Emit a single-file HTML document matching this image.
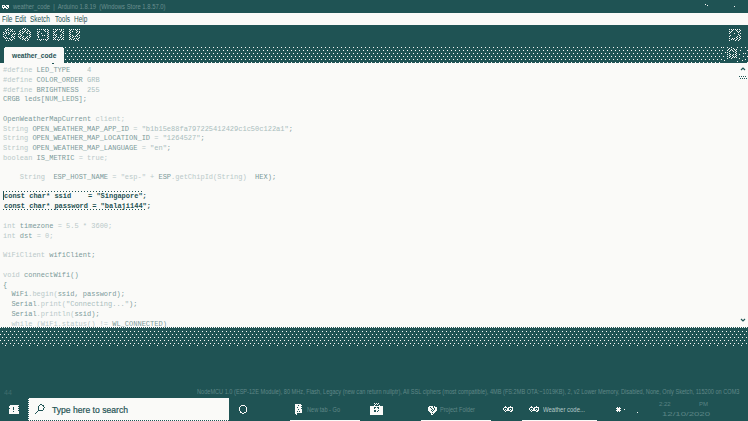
<!DOCTYPE html>
<html><head><meta charset="utf-8">
<style>
*{margin:0;padding:0;box-sizing:border-box}
html,body{width:748px;height:421px;overflow:hidden;background:#fafaf8;font-family:"Liberation Sans",sans-serif}
.a{position:absolute;white-space:pre}
.teal{background:#1f5354}
svg{position:absolute;display:block;shape-rendering:crispEdges}
#code{position:absolute;left:3px;top:66px;font-family:"Liberation Mono",monospace;font-size:7px;line-height:9.75px;white-space:pre;color:#7d9b9b}
#code .k{color:#b9c9c9}
#code .s{color:#a9bdbd}
#code .b{font-weight:bold;color:#1f5354;position:relative;top:-1px;left:1px}
.mn{position:absolute;top:14px;font-size:8.5px;line-height:10px;color:#1f5354;transform:scaleX(.76);transform-origin:0 0}
</style></head><body>
<svg width="0" height="0" style="left:0;top:0"><defs>
<pattern id="pd" width="4" height="6" patternUnits="userSpaceOnUse"><rect width="4" height="6" fill="#1f5354"/><rect x="1" y="0" width="1" height="1" fill="#fafaf8"/><rect x="3" y="3" width="1" height="1" fill="#fafaf8"/></pattern>
<pattern id="pc" width="2" height="2" patternUnits="userSpaceOnUse"><rect width="2" height="2" fill="#1f5354"/><rect x="0" y="0" width="1" height="1" fill="#fafaf8"/><rect x="1" y="1" width="1" height="1" fill="#fafaf8"/></pattern>
<pattern id="ph" width="3" height="1" patternUnits="userSpaceOnUse"><rect x="0" width="1" height="1" fill="#1f5354"/></pattern>
<pattern id="ps" width="8" height="1" patternUnits="userSpaceOnUse"><rect width="8" height="1" fill="#1f5354"/><rect x="5" width="1" height="1" fill="#fafaf8"/></pattern>
<pattern id="pd2" width="4" height="6" patternUnits="userSpaceOnUse"><rect width="4" height="6" fill="#1f5354"/><rect x="0" y="1" width="1" height="1" fill="#fafaf8"/><rect x="2" y="4" width="1" height="1" fill="#fafaf8"/></pattern>
</defs></svg>
<!-- title bar -->
<div class="a teal" style="left:0;top:0;width:748px;height:13px"></div>
<svg style="left:0;top:0" width="12" height="12"><path fill="#fafaf8" d="M2 5h1v1h-1zM3 5h1v1h-1zM4 5h1v1h-1zM6 5h1v1h-1zM7 5h1v1h-1zM8 5h1v1h-1zM2 6h1v1h-1zM4 6h1v1h-1zM5 6h1v1h-1zM7 6h1v1h-1zM8 6h1v1h-1zM2 7h1v1h-1zM3 7h1v1h-1zM4 7h1v1h-1zM5 7h1v1h-1zM6 7h1v1h-1zM8 7h1v1h-1zM3 8h1v1h-1zM6 8h1v1h-1zM7 8h1v1h-1z"/></svg>
<div class="a" style="left:13px;top:2px;font-size:7px;line-height:9px;color:#6a8f8f;transform:scaleX(.84);transform-origin:0 0">weather_code  |  Arduino 1.8.19  (Windows Store 1.8.57.0)</div>
<div class="a" style="left:705px;top:4px;width:1px;height:1px;background:#fafaf8"></div><div class="a" style="left:707px;top:5px;width:1px;height:1px;background:#fafaf8"></div><div class="a" style="left:734px;top:6px;width:1px;height:1px;background:#fafaf8"></div>
<!-- menu -->
<div class="mn" style="left:2px">File</div>
<div class="mn" style="left:15px">Edit</div>
<div class="mn" style="left:30px">Sketch</div>
<div class="mn" style="left:55px">Tools</div>
<div class="mn" style="left:74px">Help</div>
<!-- toolbar -->
<div class="a teal" style="left:0;top:25px;width:748px;height:22px"></div>
<svg style="left:0;top:0" width="90" height="45"><path fill="#fafaf8" d="M8 28h1v1h-1zM5 29h1v1h-1zM7 29h1v1h-1zM10 29h1v1h-1zM12 29h1v1h-1zM6 30h1v1h-1zM8 30h1v1h-1zM11 30h1v1h-1zM5 31h1v1h-1zM10 31h1v1h-1zM12 31h1v1h-1zM14 31h1v1h-1zM3 32h1v1h-1zM6 32h1v1h-1zM8 32h1v1h-1zM4 33h1v1h-1zM6 33h1v1h-1zM9 33h1v1h-1zM13 33h1v1h-1zM15 33h1v1h-1zM3 34h1v1h-1zM8 34h1v1h-1zM12 34h1v1h-1zM14 34h1v1h-1zM5 35h1v1h-1zM11 35h1v1h-1zM3 36h1v1h-1zM12 36h1v1h-1zM14 36h1v1h-1zM4 37h1v1h-1zM6 37h1v1h-1zM11 37h1v1h-1zM13 37h1v1h-1zM5 38h1v1h-1zM7 38h1v1h-1zM9 38h1v1h-1zM14 38h1v1h-1zM10 39h1v1h-1zM12 39h1v1h-1zM6 40h1v1h-1zM8 40h1v1h-1zM11 40h1v1h-1zM23 28h1v1h-1zM25 28h1v1h-1zM22 29h1v1h-1zM24 29h1v1h-1zM27 29h1v1h-1zM20 30h1v1h-1zM25 30h1v1h-1zM28 30h1v1h-1zM19 31h1v1h-1zM22 31h1v1h-1zM24 31h1v1h-1zM27 31h1v1h-1zM29 31h1v1h-1zM20 32h1v1h-1zM23 32h1v1h-1zM26 32h1v1h-1zM30 32h1v1h-1zM19 33h1v1h-1zM22 33h1v1h-1zM27 33h1v1h-1zM29 33h1v1h-1zM18 34h1v1h-1zM20 34h1v1h-1zM30 34h1v1h-1zM21 35h1v1h-1zM29 35h1v1h-1zM18 36h1v1h-1zM20 36h1v1h-1zM23 36h1v1h-1zM27 36h1v1h-1zM30 36h1v1h-1zM19 37h1v1h-1zM22 37h1v1h-1zM26 37h1v1h-1zM29 37h1v1h-1zM20 38h1v1h-1zM23 38h1v1h-1zM25 38h1v1h-1zM27 38h1v1h-1zM22 39h1v1h-1zM24 39h1v1h-1zM28 39h1v1h-1zM25 40h1v1h-1zM27 40h1v1h-1zM37 29h1v1h-1zM39 29h1v1h-1zM41 29h1v1h-1zM43 29h1v1h-1zM45 29h1v1h-1zM47 29h1v1h-1zM44 30h1v1h-1zM48 30h1v1h-1zM37 31h1v1h-1zM39 31h1v1h-1zM45 31h1v1h-1zM47 31h1v1h-1zM38 32h1v1h-1zM48 32h1v1h-1zM37 33h1v1h-1zM41 33h1v1h-1zM47 33h1v1h-1zM38 34h1v1h-1zM48 34h1v1h-1zM37 35h1v1h-1zM42 35h1v1h-1zM44 35h1v1h-1zM47 35h1v1h-1zM38 36h1v1h-1zM48 36h1v1h-1zM38 37h1v1h-1zM47 37h1v1h-1zM48 38h1v1h-1zM37 39h1v1h-1zM39 39h1v1h-1zM41 39h1v1h-1zM43 39h1v1h-1zM45 39h1v1h-1zM47 39h1v1h-1zM40 40h1v1h-1zM46 40h1v1h-1zM53 29h1v1h-1zM55 29h1v1h-1zM57 29h1v1h-1zM59 29h1v1h-1zM61 29h1v1h-1zM63 29h1v1h-1zM56 30h1v1h-1zM61 30h1v1h-1zM53 31h1v1h-1zM55 31h1v1h-1zM60 31h1v1h-1zM63 31h1v1h-1zM54 32h1v1h-1zM62 32h1v1h-1zM53 33h1v1h-1zM63 33h1v1h-1zM54 34h1v1h-1zM56 34h1v1h-1zM61 34h1v1h-1zM53 35h1v1h-1zM55 35h1v1h-1zM60 35h1v1h-1zM63 35h1v1h-1zM56 36h1v1h-1zM61 36h1v1h-1zM53 37h1v1h-1zM55 37h1v1h-1zM58 37h1v1h-1zM60 37h1v1h-1zM63 37h1v1h-1zM54 38h1v1h-1zM62 38h1v1h-1zM53 39h1v1h-1zM55 39h1v1h-1zM57 39h1v1h-1zM59 39h1v1h-1zM61 39h1v1h-1zM63 39h1v1h-1zM58 40h1v1h-1zM69 29h1v1h-1zM71 29h1v1h-1zM73 29h1v1h-1zM75 29h1v1h-1zM77 29h1v1h-1zM79 29h1v1h-1zM70 30h1v1h-1zM76 30h1v1h-1zM69 31h1v1h-1zM72 31h1v1h-1zM77 31h1v1h-1zM79 31h1v1h-1zM70 32h1v1h-1zM76 32h1v1h-1zM79 32h1v1h-1zM69 33h1v1h-1zM78 33h1v1h-1zM70 34h1v1h-1zM77 34h1v1h-1zM69 35h1v1h-1zM72 35h1v1h-1zM76 35h1v1h-1zM79 35h1v1h-1zM70 36h1v1h-1zM73 36h1v1h-1zM75 36h1v1h-1zM77 36h1v1h-1zM69 37h1v1h-1zM72 37h1v1h-1zM79 37h1v1h-1zM70 38h1v1h-1zM74 38h1v1h-1zM76 38h1v1h-1zM78 38h1v1h-1zM69 39h1v1h-1zM71 39h1v1h-1zM73 39h1v1h-1zM77 39h1v1h-1zM75 40h1v1h-1zM78 40h1v1h-1z"/></svg>
<svg style="left:0;top:0" width="748" height="63"><path fill="#fafaf8" d="M729 29h1v1h-1zM731 29h1v1h-1zM733 29h1v1h-1zM735 29h1v1h-1zM737 29h1v1h-1zM739 29h1v1h-1zM732 30h1v1h-1zM736 30h1v1h-1zM740 30h1v1h-1zM729 31h1v1h-1zM731 31h1v1h-1zM737 31h1v1h-1zM739 31h1v1h-1zM730 32h1v1h-1zM738 32h1v1h-1zM729 33h1v1h-1zM734 33h1v1h-1zM740 33h1v1h-1zM738 34h1v1h-1zM730 35h1v1h-1zM739 35h1v1h-1zM729 36h1v1h-1zM737 36h1v1h-1zM740 36h1v1h-1zM736 37h1v1h-1zM739 37h1v1h-1zM729 38h1v1h-1zM732 38h1v1h-1zM734 38h1v1h-1zM737 38h1v1h-1zM740 38h1v1h-1zM731 39h1v1h-1zM733 39h1v1h-1zM736 39h1v1h-1zM739 39h1v1h-1zM729 40h1v1h-1zM735 40h1v1h-1zM738 40h1v1h-1z"/></svg>
<!-- tab bar -->
<svg style="left:0;top:47px" width="748" height="16"><rect width="748" height="16" fill="url(#pd)"/><rect width="4" height="16" fill="#1f5354"/><rect x="4" y="0" width="60" height="16" fill="#fafaf8"/><rect x="4" y="0" width="1" height="1" fill="#1f5354"/><rect x="63" y="0" width="1" height="1" fill="#1f5354"/></svg>
<svg style="left:0;top:0" width="748" height="63"><rect x="722" y="47" width="22" height="16" fill="#1f5354"/><path fill="#fafaf8" d="M723 47h1v1h-1zM727 47h1v1h-1zM731 47h1v1h-1zM737 47h1v1h-1zM741 47h1v1h-1zM729 48h1v1h-1zM733 48h1v1h-1zM728 49h1v1h-1zM731 49h1v1h-1zM734 49h1v1h-1zM736 49h1v1h-1zM722 50h1v1h-1zM727 50h1v1h-1zM730 50h1v1h-1zM732 50h1v1h-1zM735 50h1v1h-1zM740 50h1v1h-1zM729 51h1v1h-1zM733 51h1v1h-1zM736 51h1v1h-1zM725 52h1v1h-1zM727 52h1v1h-1zM735 52h1v1h-1zM729 53h1v1h-1zM736 53h1v1h-1zM743 53h1v1h-1zM727 54h1v1h-1zM730 54h1v1h-1zM733 54h1v1h-1zM735 54h1v1h-1zM739 54h1v1h-1zM729 55h1v1h-1zM732 55h1v1h-1zM736 55h1v1h-1zM723 56h1v1h-1zM727 56h1v1h-1zM730 56h1v1h-1zM733 56h1v1h-1zM735 56h1v1h-1zM743 56h1v1h-1zM729 57h1v1h-1zM732 57h1v1h-1zM734 57h1v1h-1zM736 57h1v1h-1zM727 58h1v1h-1zM731 58h1v1h-1zM739 58h1v1h-1zM724 60h1v1h-1zM742 60h1v1h-1zM737 61h1v1h-1z"/></svg>
<div class="a" style="left:12px;top:51px;font-size:7px;line-height:9px;color:#1f5354;font-weight:bold;transform:scaleX(.95);transform-origin:0 0">weather_code</div>
<!-- editor -->
<div id="code"><span class="k">#define</span> LED_TYPE    <span class="s">4</span>
<span class="k">#define</span> COLOR_ORDER <span class="s">GRB</span>
<span class="k">#define</span> BRIGHTNESS  <span class="s">255</span>
CRGB leds[NUM_LEDS];

OpenWeatherMapCurrent <span class="k">client;</span>
<span class="k">String</span> OPEN_WEATHER_MAP_APP_ID <span class="k">=</span> <span class="s">"b1b15e88fa797225412429c1c50c122a1"</span>;
<span class="k">String</span> OPEN_WEATHER_MAP_LOCATION_ID <span class="k">=</span> <span class="s">"1264527"</span>;
<span class="k">String</span> OPEN_WEATHER_MAP_LANGUAGE <span class="k">=</span> <span class="s">"en"</span>;
<span class="k">boolean</span> IS_METRIC <span class="k">= true;</span>

<span class="k">    String  </span>ESP_HOST_NAME <span class="k">= "esp-" +</span> ESP<span class="k">.getChipId(String)</span>  HEX);

<span class="b">const char* ssid    = "Singapore";</span>
<span class="b">const char* password = "balaji144";</span>

<span class="k">int</span> timezone <span class="k">= 5.5 * 3600;</span>
<span class="k">int</span> dst <span class="k">= 0;</span>

<span class="k">WiFiClient</span> wifiClient;

<span class="k">void</span> connectWifi()
{
  WiFi<span class="k">.begin(</span>ssid, password);
  Serial<span class="k">.print(</span><span class="s">"Connecting..."</span>);
  Serial<span class="k">.println(</span>ssid);
  <span class="k">while (WiFi.status() !=</span> WL_CONNECTED)
</div>
<div class="a" style="left:3px;top:191px;width:1px;height:9px;background:#1f5354"></div>
<svg style="left:0;top:191px" width="150" height="19"><rect x="1" y="0" width="143" height="1" fill="url(#ph)"/><rect x="1" y="18" width="144" height="1" fill="url(#ph)"/></svg>
<div class="a" style="left:52px;top:63px;width:2px;height:1px;background:#1f5354"></div>
<svg style="left:738px;top:66px" width="10" height="14"><path d="M3 4 l2 -2 l2 2" fill="none" stroke="#1f5354" stroke-width="1.2" style="shape-rendering:auto"/><g fill="#1f5354"><rect x="1" y="10" width="1" height="1"/><rect x="3" y="10" width="1" height="1"/><rect x="5" y="10" width="1" height="1"/><rect x="7" y="10" width="1" height="1"/><rect x="2" y="12" width="1" height="1"/><rect x="4" y="12" width="1" height="1"/><rect x="6" y="12" width="1" height="1"/><rect x="8" y="12" width="1" height="1"/></g></svg>
<svg style="left:738px;top:316px" width="10" height="8"><path d="M3 3 l2 2 l2 -2" fill="none" stroke="#1f5354" stroke-width="1.2" style="shape-rendering:auto"/></svg>
<!-- console -->
<div class="a teal" style="left:0;top:327px;width:748px;height:94px"></div>
<svg style="left:0;top:327px" width="748" height="19"><rect width="748" height="1" fill="url(#pc)"/><rect y="4" width="748" height="14" fill="url(#pd2)"/><rect y="18" width="748" height="1" fill="url(#ps)"/></svg>
<div class="a" style="left:4px;top:389px;font-size:7px;line-height:8px;color:#3f6d6d">44</div>
<div class="a" style="left:197px;top:388px;font-size:7px;line-height:8px;color:#5f8787;transform:scaleX(.8);transform-origin:0 0">NodeMCU 1.0 (ESP-12E Module), 80 MHz, Flash, Legacy (new can return nullptr), All SSL ciphers (most compatible), 4MB (FS:2MB OTA:~1019KB), 2, v2 Lower Memory, Disabled, None, Only Sketch, 115200 on COM3</div>
<!-- taskbar -->
<div class="a teal" style="left:0;top:397px;width:748px;height:24px"></div>
<svg style="left:0;top:397px" width="748" height="24">
<rect x="9" y="8" width="10" height="9" fill="#fafaf8"/><path fill="#1f5354" d="M9 8h1v1h-1zM13 10h1v3h-1zM13 14h1v1h-1zM18 9h1v1h-1zM18 11h1v1h-1zM18 13h1v1h-1zM9 11h1v1h-1z"/>
<rect x="28" y="1" width="201" height="23" fill="#fafaf8"/>
<rect x="28" y="23" width="201" height="1" fill="url(#pc)"/><rect x="28" y="1" width="1" height="23" fill="url(#pc)"/>
<path fill="#1f5354" d="M40 7h1v1h-1zM41 7h1v1h-1zM39 8h1v1h-1zM42 8h1v1h-1zM43 8h1v1h-1zM38 9h1v1h-1zM43 9h1v1h-1zM38 10h1v1h-1zM44 10h1v1h-1zM38 11h1v1h-1zM43 11h1v1h-1zM38 12h1v1h-1zM43 12h1v1h-1zM38 13h1v1h-1zM39 13h1v1h-1zM40 13h1v1h-1zM41 13h1v1h-1zM42 13h1v1h-1zM37 14h1v1h-1zM36 15h1v1h-1zM35 16h1v1h-1z"/>
<path fill="#fafaf8" d="M241 8h1v1h-1zM242 8h1v1h-1zM243 8h1v1h-1zM244 8h1v1h-1zM240 9h1v1h-1zM245 9h1v1h-1zM239 10h1v1h-1zM246 10h1v1h-1zM239 11h1v1h-1zM246 11h1v1h-1zM239 12h1v1h-1zM246 12h1v1h-1zM239 13h1v1h-1zM246 13h1v1h-1zM240 14h1v1h-1zM246 14h1v1h-1zM240 15h1v1h-1zM241 15h1v1h-1zM244 15h1v1h-1zM245 15h1v1h-1zM242 16h1v1h-1zM243 16h1v1h-1z"/>
<path fill="#fafaf8" d="M295 7h1v1h-1zM296 7h1v1h-1zM297 7h1v1h-1zM298 7h1v1h-1zM299 7h1v1h-1zM300 7h1v1h-1zM295 8h1v1h-1zM296 8h1v1h-1zM297 8h1v1h-1zM298 8h1v1h-1zM299 8h1v1h-1zM300 8h1v1h-1zM295 9h1v1h-1zM296 9h1v1h-1zM297 9h1v1h-1zM298 9h1v1h-1zM299 9h1v1h-1zM300 9h1v1h-1zM295 10h1v1h-1zM296 10h1v1h-1zM297 10h1v1h-1zM298 10h1v1h-1zM299 10h1v1h-1zM300 10h1v1h-1zM295 11h1v1h-1zM296 11h1v1h-1zM297 11h1v1h-1zM298 11h1v1h-1zM299 11h1v1h-1zM300 11h1v1h-1zM295 12h1v1h-1zM296 12h1v1h-1zM297 12h1v1h-1zM298 12h1v1h-1zM299 12h1v1h-1zM300 12h1v1h-1zM295 13h1v1h-1zM296 13h1v1h-1zM297 13h1v1h-1zM298 13h1v1h-1zM299 13h1v1h-1zM300 13h1v1h-1zM295 14h1v1h-1zM296 14h1v1h-1zM297 14h1v1h-1zM298 14h1v1h-1zM299 14h1v1h-1zM300 14h1v1h-1zM295 15h1v1h-1zM296 15h1v1h-1zM297 15h1v1h-1zM298 15h1v1h-1zM299 15h1v1h-1zM300 15h1v1h-1zM301 8h1v1h-1zM301 10h1v1h-1zM301 12h1v1h-1zM301 13h1v1h-1zM301 14h1v1h-1zM301 15h1v1h-1zM295 16h1v1h-1zM296 16h1v1h-1zM296 17h1v1h-1z"/><path fill="#1f5354" d="M298 8h1v1h-1zM297 10h1v1h-1zM298 12h1v1h-1zM297 14h1v1h-1zM299 14h1v1h-1z"/>
<rect x="290" y="23" width="70" height="1" fill="#fafaf8"/>
<path fill="#fafaf8" d="M370 9h1v1h-1zM371 9h1v1h-1zM372 9h1v1h-1zM373 9h1v1h-1zM374 9h1v1h-1zM375 9h1v1h-1zM376 9h1v1h-1zM377 9h1v1h-1zM378 9h1v1h-1zM379 9h1v1h-1zM380 9h1v1h-1zM381 9h1v1h-1zM382 9h1v1h-1zM370 10h1v1h-1zM371 10h1v1h-1zM372 10h1v1h-1zM373 10h1v1h-1zM374 10h1v1h-1zM375 10h1v1h-1zM376 10h1v1h-1zM377 10h1v1h-1zM378 10h1v1h-1zM379 10h1v1h-1zM380 10h1v1h-1zM381 10h1v1h-1zM382 10h1v1h-1zM370 11h1v1h-1zM371 11h1v1h-1zM372 11h1v1h-1zM373 11h1v1h-1zM374 11h1v1h-1zM375 11h1v1h-1zM376 11h1v1h-1zM377 11h1v1h-1zM378 11h1v1h-1zM379 11h1v1h-1zM380 11h1v1h-1zM381 11h1v1h-1zM382 11h1v1h-1zM370 12h1v1h-1zM371 12h1v1h-1zM372 12h1v1h-1zM373 12h1v1h-1zM374 12h1v1h-1zM375 12h1v1h-1zM376 12h1v1h-1zM377 12h1v1h-1zM378 12h1v1h-1zM379 12h1v1h-1zM380 12h1v1h-1zM381 12h1v1h-1zM382 12h1v1h-1zM370 13h1v1h-1zM371 13h1v1h-1zM372 13h1v1h-1zM373 13h1v1h-1zM374 13h1v1h-1zM375 13h1v1h-1zM376 13h1v1h-1zM377 13h1v1h-1zM378 13h1v1h-1zM379 13h1v1h-1zM380 13h1v1h-1zM381 13h1v1h-1zM382 13h1v1h-1zM370 14h1v1h-1zM371 14h1v1h-1zM372 14h1v1h-1zM373 14h1v1h-1zM374 14h1v1h-1zM375 14h1v1h-1zM376 14h1v1h-1zM377 14h1v1h-1zM378 14h1v1h-1zM379 14h1v1h-1zM380 14h1v1h-1zM381 14h1v1h-1zM382 14h1v1h-1zM370 15h1v1h-1zM371 15h1v1h-1zM372 15h1v1h-1zM373 15h1v1h-1zM374 15h1v1h-1zM375 15h1v1h-1zM376 15h1v1h-1zM377 15h1v1h-1zM378 15h1v1h-1zM379 15h1v1h-1zM380 15h1v1h-1zM381 15h1v1h-1zM382 15h1v1h-1zM370 16h1v1h-1zM371 16h1v1h-1zM372 16h1v1h-1zM373 16h1v1h-1zM374 16h1v1h-1zM375 16h1v1h-1zM376 16h1v1h-1zM377 16h1v1h-1zM378 16h1v1h-1zM379 16h1v1h-1zM380 16h1v1h-1zM381 16h1v1h-1zM382 16h1v1h-1zM370 17h1v1h-1zM371 17h1v1h-1zM372 17h1v1h-1zM373 17h1v1h-1zM374 17h1v1h-1zM375 17h1v1h-1zM376 17h1v1h-1zM377 17h1v1h-1zM378 17h1v1h-1zM379 17h1v1h-1zM380 17h1v1h-1zM381 17h1v1h-1zM382 17h1v1h-1zM374 6h1v1h-1zM376 6h1v1h-1zM378 6h1v1h-1zM375 7h1v1h-1zM377 7h1v1h-1zM374 8h1v1h-1zM379 8h1v1h-1z"/><path fill="#1f5354" d="M374 10h1v1h-1zM375 10h1v1h-1zM377 10h1v1h-1zM378 10h1v1h-1zM374 11h1v1h-1zM378 11h1v1h-1zM374 13h1v1h-1zM375 13h1v1h-1zM378 13h1v1h-1zM374 14h1v1h-1zM375 14h1v1h-1zM377 14h1v1h-1z"/>
<path fill="#fafaf8" d="M429 9h1v1h-1zM430 9h1v1h-1zM431 9h1v1h-1zM432 9h1v1h-1zM434 9h1v1h-1zM428 10h1v1h-1zM429 10h1v1h-1zM430 10h1v1h-1zM431 10h1v1h-1zM432 10h1v1h-1zM433 10h1v1h-1zM434 10h1v1h-1zM435 10h1v1h-1zM436 10h1v1h-1zM428 11h1v1h-1zM429 11h1v1h-1zM430 11h1v1h-1zM431 11h1v1h-1zM432 11h1v1h-1zM433 11h1v1h-1zM434 11h1v1h-1zM435 11h1v1h-1zM436 11h1v1h-1zM428 12h1v1h-1zM429 12h1v1h-1zM430 12h1v1h-1zM431 12h1v1h-1zM432 12h1v1h-1zM433 12h1v1h-1zM434 12h1v1h-1zM435 12h1v1h-1zM436 12h1v1h-1zM428 13h1v1h-1zM429 13h1v1h-1zM430 13h1v1h-1zM431 13h1v1h-1zM432 13h1v1h-1zM433 13h1v1h-1zM434 13h1v1h-1zM435 13h1v1h-1zM436 13h1v1h-1zM429 14h1v1h-1zM430 14h1v1h-1zM431 14h1v1h-1zM432 14h1v1h-1zM433 14h1v1h-1zM434 14h1v1h-1zM435 14h1v1h-1zM430 15h1v1h-1zM431 15h1v1h-1zM432 15h1v1h-1zM433 15h1v1h-1zM434 15h1v1h-1zM431 16h1v1h-1zM433 16h1v1h-1zM431 17h1v1h-1zM432 17h1v1h-1z"/><path fill="#1f5354" d="M430 10h1v1h-1zM433 10h1v1h-1zM431 11h1v1h-1zM434 11h1v1h-1zM432 12h1v1h-1zM434 12h1v1h-1zM431 13h1v1h-1zM433 13h1v1h-1zM432 14h1v1h-1z"/>
<rect x="421" y="23" width="70" height="1" fill="#fafaf8"/>
<path fill="#fafaf8" d="M505 9h1v1h-1zM510 9h1v1h-1zM504 10h1v1h-1zM505 10h1v1h-1zM506 10h1v1h-1zM508 10h1v1h-1zM509 10h1v1h-1zM510 10h1v1h-1zM511 10h1v1h-1zM512 10h1v1h-1zM503 11h1v1h-1zM507 11h1v1h-1zM508 11h1v1h-1zM512 11h1v1h-1zM503 12h1v1h-1zM505 12h1v1h-1zM507 12h1v1h-1zM508 12h1v1h-1zM510 12h1v1h-1zM512 12h1v1h-1zM504 13h1v1h-1zM506 13h1v1h-1zM507 13h1v1h-1zM508 13h1v1h-1zM509 13h1v1h-1zM511 13h1v1h-1zM512 13h1v1h-1zM505 14h1v1h-1zM510 14h1v1h-1zM511 14h1v1h-1zM531 9h1v1h-1zM536 9h1v1h-1zM530 10h1v1h-1zM531 10h1v1h-1zM532 10h1v1h-1zM534 10h1v1h-1zM535 10h1v1h-1zM536 10h1v1h-1zM537 10h1v1h-1zM538 10h1v1h-1zM529 11h1v1h-1zM533 11h1v1h-1zM534 11h1v1h-1zM538 11h1v1h-1zM529 12h1v1h-1zM531 12h1v1h-1zM533 12h1v1h-1zM534 12h1v1h-1zM536 12h1v1h-1zM538 12h1v1h-1zM530 13h1v1h-1zM532 13h1v1h-1zM533 13h1v1h-1zM534 13h1v1h-1zM535 13h1v1h-1zM537 13h1v1h-1zM538 13h1v1h-1zM531 14h1v1h-1zM536 14h1v1h-1zM537 14h1v1h-1z"/>
<rect x="522" y="23" width="75" height="1" fill="#fafaf8"/>
<path fill="#fafaf8" d="M617 10h1v1h-1zM619 10h1v1h-1zM616 11h1v1h-1zM617 11h1v1h-1zM618 11h1v1h-1zM619 11h1v1h-1zM620 11h1v1h-1zM617 12h1v1h-1zM618 12h1v1h-1zM619 12h1v1h-1zM616 13h1v1h-1zM617 13h1v1h-1zM618 13h1v1h-1zM619 13h1v1h-1zM620 13h1v1h-1zM617 14h1v1h-1zM619 14h1v1h-1zM624 12h1v1h-1zM637 15h1v1h-1z"/>
</svg>
<div class="a" style="left:52px;top:404px;font-size:9px;line-height:12px;color:#1f5354;-webkit-text-stroke:.2px #1f5354;transform:scaleX(.955);transform-origin:0 0">Type here to search</div>
<div class="a" style="left:307px;top:405px;font-size:7px;line-height:9px;color:#5f8787;transform:scaleX(.8);transform-origin:0 0">New tab - Go</div>
<div class="a" style="left:440px;top:405px;font-size:7px;line-height:9px;color:#5f8787;transform:scaleX(.8);transform-origin:0 0">Project Folder</div>
<div class="a" style="left:543px;top:405px;font-size:7px;line-height:9px;color:#b5c8c8;transform:scaleX(.85);transform-origin:0 0">Weather code...</div>
<div class="a" style="left:659px;top:401px;font-size:6px;line-height:7px;color:#5a8484">2:22</div>
<div class="a" style="left:699px;top:401px;font-size:6px;line-height:7px;color:#5a8484">PM</div>
<div class="a" style="left:662px;top:411px;font-size:6px;line-height:7px;color:#5a8484;transform:scaleX(1.6);transform-origin:0 0">12/10/2020</div>
</body></html>
